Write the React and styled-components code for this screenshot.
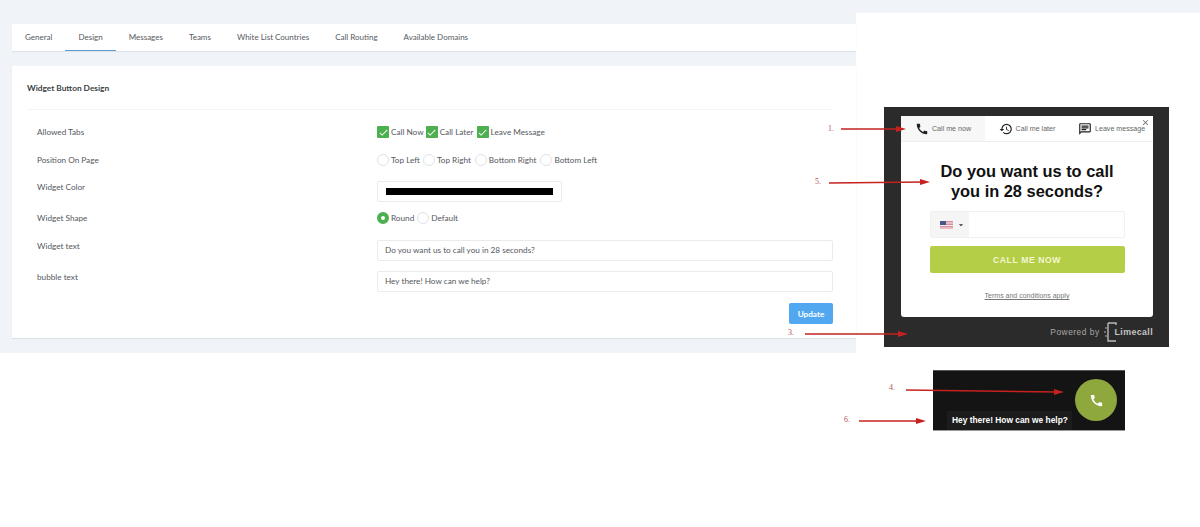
import React from "react";
import styled, { createGlobalStyle } from "styled-components";
import { MdCall, MdHistory, MdOutlineChat, MdClose, MdCheck, MdArrowDropDown } from "react-icons/md";

const Global = createGlobalStyle`
  html, body { margin: 0; padding: 0; background: #fff; }
  body { font-family: Lato, "Open Sans", "Liberation Sans", sans-serif; overflow: hidden; }
`;

const Page = styled.div`
  position: relative; display: flex; width: 1200px; height: 527px; overflow: hidden; background: #fff;
`;
const Admin = styled.div`
  width: 856px; height: 353px; box-sizing: border-box; padding: 24px 0 0 12px; background: #f0f4f9; flex: none;
`;
const TabBar = styled.nav`
  display: flex; height: 27px; background: #fff; box-shadow: 0 1px 1px #dfe4e8; padding-left: 0;
`;
const Tab = styled.div`
  box-sizing: border-box; padding: 0 13px; height: 27px; line-height: 26px; font-size: 8px; color: #55595e;
  border-bottom: 1px solid ${(p) => (p.$active ? "#5b9bd0" : "transparent")};
`;
const Card = styled.section`
  margin-top: 15px; height: 272px; box-sizing: border-box; background: #fff; box-shadow: 0 1px 1px #dde2e6; padding: 0 23px 0 15px;
`;
const CardHead = styled.h2`
  margin: 0; height: 43px; line-height: 44px; font-size: 8.3px; font-weight: 700; color: #3b3f44; border-bottom: 1px solid #f2f4f6;
`;
const Rows = styled.div`
  padding: 12px 0 0 10px;
`;
const Row = styled.div`
  display: grid; grid-template-columns: 340px 456px; min-height: 20px; margin-bottom: ${(p) => p.$gap}px;
  align-items: ${(p) => (p.$field ? "start" : "center")};
`;
const Label = styled.div`
  font-size: 8.2px; line-height: 13px; color: #55595e;
`;
const Options = styled.div`
  display: flex; align-items: center; font-size: 8.2px; color: #55595e; line-height: 13px;
`;
const Option = styled.span`
  margin-right: ${(p) => p.$gap || 2}px; margin-left: 2px;
`;
const Check = styled.span`
  width: 12px; height: 12px; border-radius: 1px; background: #4caf50; color: #fff; display: inline-flex; align-items: center; justify-content: center; flex: none;
`;
const Radio = styled.span`
  box-sizing: border-box; width: 12px; height: 12px; border-radius: 50%; flex: none;
  border: ${(p) => (p.$on ? "4px solid #4caf50" : "1px solid #dfe2e5")}; background: #fff;
`;
const Input = styled.div`
  box-sizing: border-box; height: 21px; width: ${(p) => p.$w || "456px"}; border: 1px solid #e9ecef; border-radius: 2px;
  padding: 0 ${(p) => p.$pad || 7}px; line-height: 19px; font-size: 8.2px; color: #55595e; background: #fff; display: flex; align-items: center;
`;
const Swatch = styled.div`
  height: 7px; width: 100%; background: #000;
`;
const Actions = styled.div`
  display: flex; justify-content: flex-end; width: 796px;
`;
const Update = styled.button`
  width: 44px; height: 21px; border: 0; padding: 0; border-radius: 2px; background: #51a7f0; color: #fff; font: 700 8.2px Lato, sans-serif;
`;

const Side = styled.aside`
  flex: 1; display: flex; flex-direction: column;
`;
const Strip = styled.div`
  height: 13px; background: #f0f4f9; flex: none;
`;
const Widget = styled.div`
  margin: 94px 0 0 28px; width: 285px; height: 240px; box-sizing: border-box; background: #2b2b2b; padding: 9px 16px 0 17px;
`;
const Panel = styled.div`
  position: relative; height: 201px; background: #fff; border-radius: 3px; display: flex; flex-direction: column; align-items: center; font-family: "Liberation Sans", Arial, sans-serif;
`;
const WTabs = styled.div`
  display: grid; grid-template-columns: repeat(3, 84px); height: 26px; width: 100%; border-bottom: 1px solid #eee; box-sizing: border-box;
`;
const WTab = styled.div`
  display: flex; align-items: center; justify-content: ${(p) => p.$align || "center"}; gap: 3px; font-size: 7.1px; color: #666; background: ${(p) => (p.$active ? "#f7f7f7" : "#fff")};
  padding-left: ${(p) => p.$pad || 0}px; svg { color: #222; flex: none; }
`;
const CloseBtn = styled.span`
  position: absolute; top: 2px; right: 3px; color: #666; display: flex;
`;
const Title = styled.h1`
  margin: 19px 0 0; font-size: 16.4px; line-height: 20px; font-weight: 700; color: #111; text-align: center;
`;
const Phone = styled.div`
  margin-top: 10px; width: 195px; height: 27px; box-sizing: border-box; border: 1px solid #f0f0f0; border-radius: 2px; display: flex;
`;
const Flag = styled.div`
  width: 38px; background: #f5f5f5; display: flex; align-items: center; padding-left: 9px; box-sizing: border-box; color: #333;
`;
const CallBtn = styled.button`
  margin-top: 8px; width: 195px; height: 27px; border: 0; border-radius: 2px; background: #b5ce48; color: #f3f7d0; font: 700 8.6px "Liberation Sans", Arial, sans-serif; letter-spacing: .6px;
`;
const Terms = styled.a`
  margin-top: 18px; font-size: 7px; line-height: 9px; color: #777; text-decoration: underline;
`;
const Powered = styled.div`
  height: 30px; display: flex; align-items: center; justify-content: flex-end; font: 8.4px "Liberation Sans", Arial, sans-serif; color: #a8a8a8; letter-spacing: .5px;
`;
const Brand = styled.span`
  font-weight: 700; color: #c4c4c4; font-size: 8.8px; letter-spacing: .4px; margin-left: -6px;
`;
const Bubble = styled.div`
  position: relative; margin: 23px 0 0 77px; width: 192px; height: 61px; box-sizing: border-box; background: #141414; border-top: 1px solid #555; border-bottom: 1px solid #999;
`;
const Fab = styled.div`
  position: absolute; left: 142px; top: 8px; width: 42px; height: 42px; border-radius: 50%; background: #8fa83e; color: #fff; display: flex; align-items: center; justify-content: center;
`;
const Tip = styled.div`
  position: absolute; left: 14px; bottom: 0; width: 125px; height: 19px; box-sizing: border-box; padding-left: 5px; background: #1c1c1c; color: #fff; font: 700 8.4px/19px "Liberation Sans", Arial, sans-serif; white-space: nowrap;
`;
const Overlay = styled.svg`
  position: absolute; inset: 0; pointer-events: none;
`;
const Note = styled.span`
  position: absolute; left: ${(p) => p.$x}px; top: ${(p) => p.$y}px; font: 8px/10px "Liberation Serif", serif; color: #b25555;
`;

const tabs = ["General", "Design", "Messages", "Teams", "White List Countries", "Call Routing", "Available Domains"];
const arrows = [
  [841, 129, 906, 129],
  [829, 183, 930, 182],
  [805, 334, 908, 334],
  [906, 390, 1064, 392],
  [859, 421, 926, 421],
];
const notes = [["1.", 828, 124], ["5.", 815, 177], ["3.", 788, 328], ["4.", 889, 383], ["6.", 844, 415]];

const Checked = ({ children, gap }) => (
  <>
    <Check><MdCheck size={11} /></Check>
    <Option $gap={gap}>{children}</Option>
  </>
);
const Choice = ({ children, on, gap }) => (
  <>
    <Radio $on={on} />
    <Option $gap={gap}>{children}</Option>
  </>
);

export default function App() {
  return (
    <Page>
      <Global />
      <Admin>
        <TabBar>
          {tabs.map((t) => <Tab key={t} $active={t === "Design"}>{t}</Tab>)}
        </TabBar>
        <Card>
          <CardHead>Widget Button Design</CardHead>
          <Rows>
            <Row $gap={8}>
              <Label>Allowed Tabs</Label>
              <Options>
                <Checked gap={2}>Call Now</Checked>
                <Checked gap={3}>Call Later</Checked>
                <Checked>Leave Message</Checked>
              </Options>
            </Row>
            <Row $gap={11}>
              <Label>Position On Page</Label>
              <Options>
                <Choice gap={3}>Top Left</Choice>
                <Choice gap={4}>Top Right</Choice>
                <Choice gap={4}>Bottom Right</Choice>
                <Choice>Bottom Left</Choice>
              </Options>
            </Row>
            <Row $gap={6} $field>
              <Label>Widget Color</Label>
              <Input $w="185px" $pad={8}><Swatch /></Input>
            </Row>
            <Row $gap={12}>
              <Label>Widget Shape</Label>
              <Options>
                <Choice on gap={3}>Round</Choice>
                <Choice>Default</Choice>
              </Options>
            </Row>
            <Row $gap={10} $field>
              <Label>Widget text</Label>
              <Input>Do you want us to call you in 28 seconds?</Input>
            </Row>
            <Row $gap={11} $field>
              <Label>bubble text</Label>
              <Input>Hey there! How can we help?</Input>
            </Row>
            <Actions><Update>Update</Update></Actions>
          </Rows>
        </Card>
      </Admin>
      <Side>
        <Strip />
        <Widget>
          <Panel>
            <WTabs>
              <WTab $active><MdCall size={14} />Call me now</WTab>
              <WTab><MdHistory size={14} />Call me later</WTab>
              <WTab $align="flex-start" $pad={9}><MdOutlineChat size={14} />Leave message</WTab>
            </WTabs>
            <CloseBtn><MdClose size={9} /></CloseBtn>
            <Title>Do you want us to call<br />you in 28 seconds?</Title>
            <Phone>
              <Flag>
                <svg width="13" height="8" viewBox="0 0 13 8">
                  <rect width="13" height="8" fill="#d98c9b" />
                  <rect y="1.5" width="13" height="1" fill="#f3eef0" />
                  <rect y="4" width="13" height="1" fill="#f3eef0" />
                  <rect y="6.5" width="13" height="1" fill="#f3eef0" />
                  <rect width="6" height="4" fill="#4a5688" />
                </svg>
                <MdArrowDropDown size={10} style={{ marginLeft: 3 }} />
              </Flag>
            </Phone>
            <CallBtn>CALL ME NOW</CallBtn>
            <Terms>Terms and conditions apply</Terms>
          </Panel>
          <Powered>
            Powered by
            <svg width="17" height="22" viewBox="0 0 17 22" style={{ margin: "0 0 0 4px" }}>
              <path d="M4 2h8v2M4 2v18h8" fill="none" stroke="#bbb" strokeWidth="1.4" />
              <path d="M2 6v2M1 10v2M2 14v2M7 20h5" stroke="#999" strokeWidth="1.2" />
            </svg>
            <Brand>Limecall</Brand>
          </Powered>
        </Widget>
        <Bubble>
          <Fab><MdCall size={15} /></Fab>
          <Tip>Hey there! How can we help?</Tip>
        </Bubble>
      </Side>
      <Overlay width="1200" height="527" viewBox="0 0 1200 527">
        {arrows.map(([a, b, c, d]) => (
          <g key={a}>
            <line x1={a} y1={b} x2={c - 6} y2={d} stroke="#c5221f" strokeWidth="1.6" />
            <polygon points={`${c},${d} ${c - 10},${d - 3} ${c - 10},${d + 3}`} fill="#c5221f" />
          </g>
        ))}
      </Overlay>
      {notes.map(([t, x, y]) => <Note key={t} $x={x} $y={y}>{t}</Note>)}
    </Page>
  );
}
